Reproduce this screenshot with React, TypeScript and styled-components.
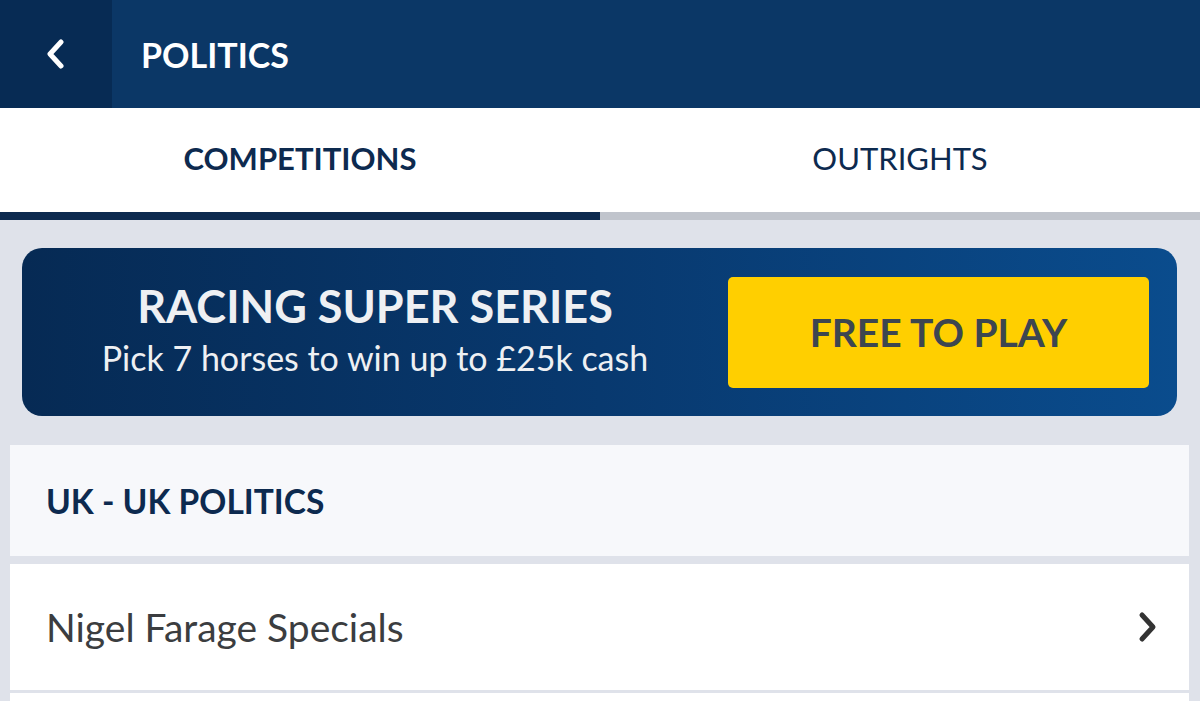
import React, { useState } from 'react';
import styled, { createGlobalStyle } from 'styled-components';

const GlobalStyle = createGlobalStyle`
  html, body {
    margin: 0;
    padding: 0;
    background: #dfe2ea;
    font-family: Lato, 'Open Sans', sans-serif;
  }
`;

const Page = styled.div`
  width: 1200px;
  height: 701px;
  background: #dfe2ea;
  overflow: hidden;
`;

const Header = styled.header`
  display: flex;
  height: 108px;
  background: #0b3766;
`;

const BackButton = styled.button`
  width: 112px;
  height: 100%;
  display: flex;
  align-items: center;
  justify-content: center;
  background: #072b54;
  border: none;
  padding: 0;
  cursor: pointer;
`;

const HeaderTitle = styled.h1`
  margin: 0 0 0 29px;
  align-self: center;
  color: #ffffff;
  font-size: 34px;
  font-weight: 700;
`;

const Tabs = styled.nav`
  display: flex;
  background: #ffffff;
`;

const Tab = styled.button<{ $active?: boolean }>`
  flex: 1;
  height: 112px;
  padding: 0 0 4px;
  background: #ffffff;
  border: none;
  border-bottom: 8px solid ${(p) => (p.$active ? '#0d2a4f' : '#c0c4cc')};
  color: #0d2a4f;
  font-family: Lato, sans-serif;
  font-size: 31px;
  font-weight: ${(p) => (p.$active ? 700 : 400)};
  cursor: pointer;
`;

const Content = styled.main`
  padding: 28px 0 0;
`;

const Banner = styled.section`
  margin: 0 23px 0 22px;
  height: 168px;
  border-radius: 20px;
  background: linear-gradient(90deg, #062a54 0%, #08396f 50%, #0a4c8d 100%);
  display: flex;
  align-items: center;
  padding: 0 28px 0 0;
`;

const BannerText = styled.div`
  flex: 1;
  display: flex;
  flex-direction: column;
  align-items: center;
  color: #eef0f3;
  padding-bottom: 4px;
`;

const BannerTitle = styled.div`
  font-size: 45px;
  font-weight: 700;
  line-height: 50px;
`;

const BannerSub = styled.div`
  font-size: 34px;
  font-weight: 400;
  line-height: 42px;
  margin-top: 6px;
`;

const PlayButton = styled.button`
  width: 421px;
  height: 111px;
  background: #ffcf00;
  border: none;
  border-radius: 5px;
  color: #3d4650;
  font-family: Lato, sans-serif;
  font-size: 39px;
  font-weight: 700;
  cursor: pointer;
`;

const Card = styled.section`
  margin: 29px 11px 0 10px;
  display: flex;
  flex-direction: column;
  gap: 8px;
`;

const SectionHeader = styled.div`
  height: 111px;
  background: #f7f8fb;
  display: flex;
  align-items: center;
  padding: 0 36px;
  color: #0d2a4f;
  font-size: 33.5px;
  font-weight: 700;
`;

const Row = styled.div<{ $last?: boolean }>`
  height: 126px;
  background: #ffffff;
  display: flex;
  align-items: center;
  justify-content: space-between;
  padding: 0 30px 0 36px;
  color: #3b3d40;
  font-size: 39px;
  font-weight: 400;
  margin-bottom: ${(p) => (p.$last ? '0' : '-5px')};
`;

const ChevronLeft = () => (
  <svg width="22" height="30" viewBox="0 0 22 30">
    <path d="M16 3 L5 15 L16 27" fill="none" stroke="#ffffff" strokeWidth="5" strokeLinecap="round" strokeLinejoin="round" />
  </svg>
);

const ChevronRight = () => (
  <svg width="22" height="32" viewBox="0 0 22 32">
    <path d="M5 4 L16 16 L5 28" fill="none" stroke="#333333" strokeWidth="5" strokeLinecap="round" strokeLinejoin="round" />
  </svg>
);

const rows = ['Nigel Farage Specials', ''];

export default function App() {
  const [tab, setTab] = useState('competitions');

  return (
    <Page>
      <GlobalStyle />
      <Header>
        <BackButton aria-label="Back">
          <ChevronLeft />
        </BackButton>
        <HeaderTitle>POLITICS</HeaderTitle>
      </Header>
      <Tabs>
        <Tab $active={tab === 'competitions'} onClick={() => setTab('competitions')}>
          COMPETITIONS
        </Tab>
        <Tab $active={tab === 'outrights'} onClick={() => setTab('outrights')}>
          OUTRIGHTS
        </Tab>
      </Tabs>
      <Content>
        <Banner>
          <BannerText>
            <BannerTitle>RACING SUPER SERIES</BannerTitle>
            <BannerSub>Pick 7 horses to win up to £25k cash</BannerSub>
          </BannerText>
          <PlayButton>FREE TO PLAY</PlayButton>
        </Banner>
        <Card>
          <SectionHeader>UK - UK POLITICS</SectionHeader>
          {rows.map((r, i) => (
            <Row key={i} $last={i === rows.length - 1}>
              <span>{r}</span>
              {r && <ChevronRight />}
            </Row>
          ))}
        </Card>
      </Content>
    </Page>
  );
}
